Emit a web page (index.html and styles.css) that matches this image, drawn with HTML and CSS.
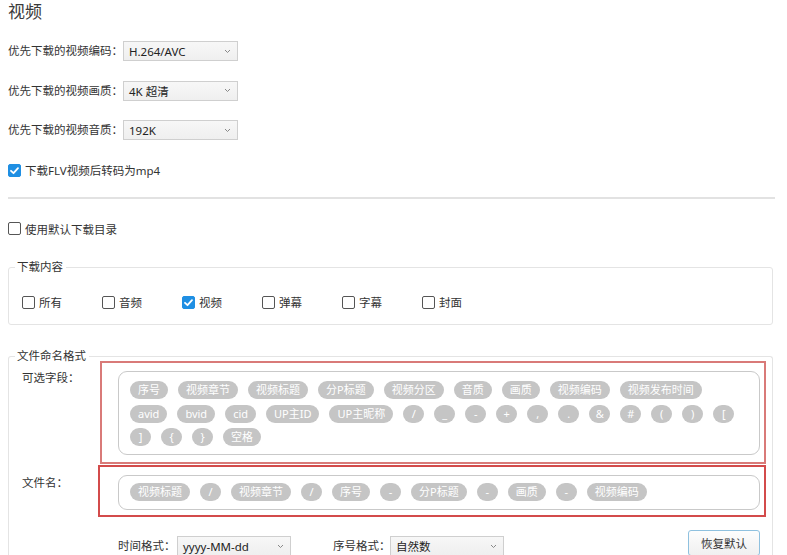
FILE: index.html
```html
<!DOCTYPE html>
<html lang="zh-CN">
<head>
<meta charset="utf-8">
<title>视频</title>
<link rel="stylesheet" href="styles.css">
</head>
<body>
<div class="page">
  <div class="title">视频</div>

  <div class="form-row first">
    <span class="label">优先下载的视频编码：</span>
    <div class="select"><span>H.264/AVC</span><svg class="chev" width="7" height="5" viewBox="0 0 7 5"><path d="M1 1 L3.5 3.5 L6 1" fill="none" stroke="#888" stroke-width="1"/></svg></div>
  </div>
  <div class="form-row">
    <span class="label">优先下载的视频画质：</span>
    <div class="select"><span>4K 超清</span><svg class="chev" width="7" height="5" viewBox="0 0 7 5"><path d="M1 1 L3.5 3.5 L6 1" fill="none" stroke="#888" stroke-width="1"/></svg></div>
  </div>
  <div class="form-row">
    <span class="label">优先下载的视频音质：</span>
    <div class="select"><span>192K</span><svg class="chev" width="7" height="5" viewBox="0 0 7 5"><path d="M1 1 L3.5 3.5 L6 1" fill="none" stroke="#888" stroke-width="1"/></svg></div>
  </div>

  <div class="check-row cb-flv">
    <span class="cb checked"><svg width="13" height="13" viewBox="0 0 13 13"><path d="M3 6.8 L5.5 9.2 L10 4.2" fill="none" stroke="#fff" stroke-width="1.8" stroke-linecap="round" stroke-linejoin="round"/></svg></span>
    <span>下载FLV视频后转码为mp4</span>
  </div>

  <div class="separator"></div>

  <div class="check-row cb-dir">
    <span class="cb"></span>
    <span>使用默认下载目录</span>
  </div>

  <fieldset class="group group-content">
    <legend>下载内容</legend>
    <div class="content-items">
      <div class="item"><span class="cb"></span><span>所有</span></div>
      <div class="item"><span class="cb"></span><span>音频</span></div>
      <div class="item"><span class="cb checked"><svg width="13" height="13" viewBox="0 0 13 13"><path d="M3 6.8 L5.5 9.2 L10 4.2" fill="none" stroke="#fff" stroke-width="1.8" stroke-linecap="round" stroke-linejoin="round"/></svg></span><span>视频</span></div>
      <div class="item"><span class="cb"></span><span>弹幕</span></div>
      <div class="item"><span class="cb"></span><span>字幕</span></div>
      <div class="item"><span class="cb"></span><span>封面</span></div>
    </div>
  </fieldset>

  <fieldset class="group group-name">
    <legend>文件命名格式</legend>
    <div class="name-row">
      <div class="name-label">可选字段：</div>
      <div class="red-box red-1">
        <div class="tag-box">
          <span class="tag">序号</span><span class="tag">视频章节</span><span class="tag">视频标题</span><span class="tag">分P标题</span><span class="tag">视频分区</span><span class="tag">音质</span><span class="tag">画质</span><span class="tag">视频编码</span><span class="tag">视频发布时间</span>
          <span class="tag">avid</span><span class="tag">bvid</span><span class="tag">cid</span><span class="tag">UP主ID</span><span class="tag">UP主昵称</span><span class="tag c">/</span><span class="tag c">_</span><span class="tag c">-</span><span class="tag c">+</span><span class="tag c">,</span><span class="tag c">.</span><span class="tag c">&amp;</span><span class="tag c">#</span><span class="tag c">(</span><span class="tag c">)</span><span class="tag c">[</span>
          <span class="tag c">]</span><span class="tag c">{</span><span class="tag c">}</span><span class="tag">空格</span>
        </div>
      </div>
    </div>
    <div class="name-row second">
      <div class="name-label">文件名：</div>
      <div class="red-box red-2">
        <div class="tag-box single">
          <span class="tag">视频标题</span><span class="tag c">/</span><span class="tag">视频章节</span><span class="tag c">/</span><span class="tag">序号</span><span class="tag c">-</span><span class="tag">分P标题</span><span class="tag c">-</span><span class="tag">画质</span><span class="tag c">-</span><span class="tag">视频编码</span>
        </div>
      </div>
    </div>
    <div class="bottom-row">
      <span class="label">时间格式：</span>
      <div class="select small"><span>yyyy-MM-dd</span><svg class="chev" width="7" height="5" viewBox="0 0 7 5"><path d="M1 1 L3.5 3.5 L6 1" fill="none" stroke="#888" stroke-width="1"/></svg></div>
      <span class="label second-label">序号格式：</span>
      <div class="select small"><span>自然数</span><svg class="chev" width="7" height="5" viewBox="0 0 7 5"><path d="M1 1 L3.5 3.5 L6 1" fill="none" stroke="#888" stroke-width="1"/></svg></div>
      <button class="btn">恢复默认</button>
    </div>
  </fieldset>
</div>
</body>
</html>
```

FILE: styles.css
```css
* { box-sizing: border-box; }
html, body { margin: 0; padding: 0; background: #fff; }
body {
  font-family: "Noto Sans", "Noto Sans CJK SC", sans-serif;
  font-size: 11.5px;
  color: #333;
  overflow: hidden;
  height: 555px;
}
.page { padding: 0 8px; width: 777px; }
.title { font-size: 17px; line-height: 24px; height: 24px; color: #3a3a3a; }

.form-row { display: flex; align-items: center; height: 20px; margin-top: 19.5px; }
.form-row.first { margin-top: 17px; }
.label { white-space: nowrap; line-height: 16px; }
.form-row .label { width: 115px; }

.select {
  display: flex; align-items: center; justify-content: space-between;
  width: 115px; height: 20px;
  border: 1px solid #cfcfcf;
  background: linear-gradient(#f7f7f7, #efefef);
  padding: 0 6px 0 5px;
  font-size: 11.5px; color: #222;
}
.chev { flex: none; }

.check-row { display: flex; align-items: center; height: 20px; gap: 4px; }
.cb-flv { margin-top: 20px; }
.cb-dir { margin-top: 19.5px; }
.cb {
  width: 13px; height: 13px; flex: none;
  border: 1.5px solid #555; border-radius: 2px; background: #fff;
  display: inline-flex; align-items: center; justify-content: center;
}
.cb.checked { background: #1f8fe3; border-color: #1f8fe3; }
.cb.checked svg { margin: -1.5px; }

.separator { height: 2px; background: #e2e2e2; margin-top: 17px; width: 767px; }

.group {
  margin: 0; padding: 0;
  border: 1px solid #e4e4e4; border-radius: 3px;
  min-width: 0;
}
.group legend {
  margin-left: 6px; padding: 0 3px 0 2px;
  line-height: 10px; height: 10px; font-size: 11.5px; color: #333;
}
.group-content { margin-top: 23.5px; width: 765px; padding: 20px 0 12px 13px; }
.group-content legend { margin-left: -7px; }
.content-items { display: flex; }
.item { display: flex; align-items: center; gap: 4px; width: 80px; height: 20px; }

.group-name { margin-top: 26px; width: 765px; padding: 0 6px 20px 0; border-bottom: none; }
.name-row { display: flex; }
.name-row.second { margin-top: 1px; }
.name-label { width: 91px; padding-left: 13px; padding-top: 9px; line-height: 16px; flex: none; }
.name-row.second .name-label { padding-top: 10px; }

.red-box { flex: 1; border: 2px solid #d86a6a; }
.red-1 { padding: 8px 4px 7px 16px; border-color: #d97a78; }
.red-2 { padding: 8px 4px 5px 18px; border-color: #d34b4b; margin-left: -2px; }

.tag-box {
  border: 1px solid #c9c9c9; border-radius: 9px;
  display: flex; flex-wrap: wrap; column-gap: 10px; row-gap: 5.5px;
  padding: 9px 16px 8px 11px;
}
.tag-box.single { padding: 7px 10px 8px 11px; }
.tag {
  height: 18px; line-height: 18px; padding: 0 8px;
  border-radius: 9px; background: #c5c5c5; color: #fff;
  font-size: 11px; white-space: nowrap; text-align: center;
}
.tag.c { min-width: 21px; padding: 0 4px; }

.bottom-row { display: flex; align-items: flex-end; margin-top: 13px; padding-left: 109px; padding-right: 6px; }
.bottom-row .label { height: 20px; line-height: 20px; width: 59px; }
.bottom-row .second-label { margin-left: 42px; width: 57px; }
.select.small { width: 114px; }
.btn {
  margin-left: auto;
  width: 72px; height: 26px;
  border: 1px solid #8fc1df; border-radius: 3px;
  background: linear-gradient(#fdfdfd, #f0f0f0);
  font-family: "Noto Sans", "Noto Sans CJK SC", sans-serif;
  font-size: 11.5px; color: #333; padding: 0;
}
```
